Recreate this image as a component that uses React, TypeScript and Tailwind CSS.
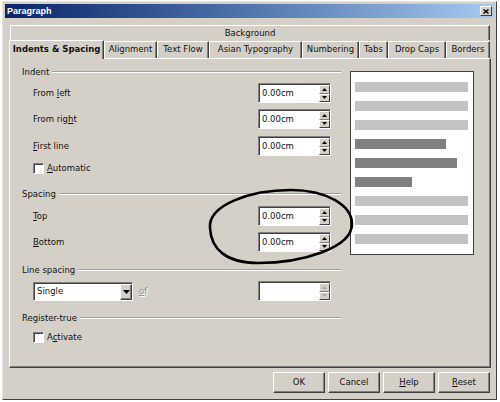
import React from "react";

const Up = ({ c = "#000" }: { c?: string }) => (
  <svg width="5" height="3" viewBox="0 0 5 3"><path d="M2.5 0 L5 3 L0 3 Z" fill={c} /></svg>
);
const Down = ({ c = "#000", w = 5, h = 3 }: { c?: string; w?: number; h?: number }) => (
  <svg width={w} height={h} viewBox={`0 0 ${w} ${h}`}><path d={`M0 0 L${w} 0 L${w / 2} ${h} Z`} fill={c} /></svg>
);

function Spin({ value, disabled }: { value?: string; disabled?: boolean }) {
  const c = disabled ? "#a8a8a8" : "#000";
  return (
    <div className="flex h-[20px] w-[73px] border border-t-[#808080] border-l-[#808080] border-r-white border-b-white bg-white shadow-[inset_1px_1px_0_#404040]">
      <div className="flex flex-1 items-center pl-[3px] pt-[1px] leading-none">{value}</div>
      <div className="flex w-[11px] flex-col pt-[1px]">
        <div className="flex flex-1 items-center justify-center border border-t-white border-l-white border-r-[#404040] border-b-[#808080] bg-[#d4d0c8]">
          <Up c={c} />
        </div>
        <div className="flex flex-1 items-center justify-center border border-t-white border-l-white border-r-[#404040] border-b-[#404040] bg-[#d4d0c8]">
          <Down c={c} />
        </div>
      </div>
    </div>
  );
}

function Check() {
  return (
    <div className="h-[11px] w-[11px] border border-t-[#808080] border-l-[#808080] border-r-white border-b-white bg-white shadow-[inset_1px_1px_0_#404040]" />
  );
}

function Group({ label, mt }: { label: string; mt: string }) {
  return (
    <div className={`flex h-[12px] items-center ${mt}`}>
      <span className="leading-[12px]">{label}</span>
      <div className="ml-[3px] h-[2px] flex-1 border-t border-b border-t-[#a0a0a0] border-b-white" />
    </div>
  );
}

function Field({ children, mt, value = "0.00cm" }: { children: React.ReactNode; mt: string; value?: string }) {
  return (
    <div className={`flex h-[20px] items-center pl-[11px] pr-[10px] ${mt}`}>
      <span className="flex-1 leading-[12px]">{children}</span>
      <Spin value={value} />
    </div>
  );
}

function Btn({ children }: { children: React.ReactNode }) {
  return (
    <div className="flex h-[21px] w-[52px] items-center justify-center border border-t-white border-l-white border-r-[#404040] border-b-[#404040] bg-[#d4d0c8] shadow-[inset_-1px_-1px_0_#808080]">
      {children}
    </div>
  );
}

const tabs: [string, number][] = [
  ["Alignment", 53],
  ["Text Flow", 52],
  ["Asian Typography", 93],
  ["Numbering", 57],
  ["Tabs", 29],
  ["Drop Caps", 58],
  ["Borders", 44],
];

export default function App() {
  const bars: [number, boolean][] = [
    [113, false],
    [113, false],
    [113, false],
    [91, true],
    [102, true],
    [57, true],
    [113, false],
    [113, false],
    [113, false],
  ];
  return (
    <div className="relative h-[402px] w-[500px] overflow-hidden bg-white font-['DejaVu_Sans',sans-serif] text-[8.5px] text-[#111]">
      <div className="ml-[2px] mt-[1px] flex h-[399px] w-[495px] flex-col border border-t-[#e8e6e0] border-l-[#e8e6e0] border-r-[#404040] border-b-[#404040] bg-[#d4d0c8] p-[2px]">
        {/* title bar */}
        <div className="flex h-[14px] items-center justify-between bg-linear-to-r from-[#0a246a] to-[#a6caf0] pl-[2px] pr-[2px]">
          <span className="font-['Liberation_Sans',sans-serif] text-[9px] font-bold leading-none text-white">Paragraph</span>
          <div className="flex h-[10px] w-[12px] items-center justify-center border border-t-white border-l-white border-r-[#404040] border-b-[#404040] bg-[#d4d0c8]">
            <svg width="6" height="5" viewBox="0 0 6 5">
              <path d="M0.5 0.5 L5.5 4.5 M5.5 0.5 L0.5 4.5" stroke="#000" strokeWidth="1.4" />
            </svg>
          </div>
        </div>

        <div className="mt-[7px] flex flex-col pl-[4px] pr-[3px]">
          {/* back tab row */}
          <div className="mx-[1px] flex h-[15px] items-center justify-center border-t border-l border-r border-t-white border-l-white border-r-[#404040] shadow-[inset_-1px_0_0_#808080] leading-none">
            Background
          </div>
          {/* front tab row */}
          <div className="flex h-[18px]">
            <div className="relative z-10 -mb-[1px] flex h-[19px] w-[95px] items-center justify-center border-t border-l border-r border-t-white border-l-white border-r-[#404040] bg-[#d4d0c8] pb-[2px] font-bold leading-none shadow-[inset_-1px_0_0_#808080]">
              Indents &amp; Spacing
            </div>
            {tabs.map(([t, w]) => (
              <div
                key={t}
                style={{ width: w }}
                className="mt-[1px] flex items-center justify-center border-t border-l border-r border-t-white border-l-white border-r-[#404040] pb-[2px] leading-none shadow-[inset_-1px_0_0_#808080]"
              >
                {t}
              </div>
            ))}
          </div>
          {/* panel */}
          <div className="flex h-[310px] border border-t-white border-l-white border-r-[#404040] border-b-[#404040] pl-[12px] shadow-[inset_-1px_-1px_0_#808080]">
            <div className="flex w-[319px] flex-col">
              <Group label="Indent" mt="mt-[7px]" />
              <Field mt="mt-[5px]">From <u className="underline-offset-1">l</u>eft</Field>
              <Field mt="mt-[6px]">From rig<u className="underline-offset-1">h</u>t</Field>
              <Field mt="mt-[7px]"><u className="underline-offset-1">F</u>irst line</Field>
              <div className="mt-[6px] flex h-[12px] items-center pl-[11px]">
                <Check />
                <span className="ml-[3px] leading-[12px]"><u className="underline-offset-1">A</u>utomatic</span>
              </div>
              <Group label="Spacing" mt="mt-[14px]" />
              <Field mt="mt-[6px]"><u className="underline-offset-1">T</u>op</Field>
              <Field mt="mt-[6px]"><u className="underline-offset-1">B</u>ottom</Field>
              <Group label="Line spacing" mt="mt-[12px]" />
              <div className="mt-[5px] flex h-[20px] items-center pl-[11px] pr-[10px]">
                <div className="flex h-[19px] w-[100px] border border-t-[#808080] border-l-[#808080] border-r-white border-b-white bg-white shadow-[inset_1px_1px_0_#404040]">
                  <div className="flex flex-1 items-center pl-[3px] pt-[1px] leading-none">Single</div>
                  <div className="mt-[1px] flex w-[12px] items-center justify-center border border-t-white border-l-white border-r-[#404040] border-b-[#404040] bg-[#d4d0c8] shadow-[inset_-1px_-1px_0_#808080]">
                    <Down w={7} h={4} />
                  </div>
                </div>
                <span className="ml-[6px] flex-1 leading-[12px] text-[#909090] [text-shadow:1px_1px_0_#fff]">
                  <u className="underline-offset-1">o</u>f
                </span>
                <Spin disabled />
              </div>
              <Group label="Register-true" mt="mt-[11px]" />
              <div className="mt-[7px] flex h-[12px] items-center pl-[11px]">
                <Check />
                <span className="ml-[3px] leading-[12px]">A<u className="underline-offset-1">c</u>tivate</span>
              </div>
            </div>
            {/* preview */}
            <div className="ml-[9px] mt-[12px] flex h-[184px] w-[124px] flex-col gap-[9px] border border-[#404040] bg-white pl-[4px] pt-[10px]">
              {bars.map(([w, dark], i) => (
                <div
                  key={i}
                  style={{ width: w }}
                  className={`h-[10px] shrink-0 ${dark ? "bg-[#808080]" : "bg-[#c3c3c3]"}`}
                />
              ))}
            </div>
          </div>
        </div>

        {/* buttons */}
        <div className="mt-[4px] flex justify-end gap-[3px] pr-[4px]">
          <Btn>OK</Btn>
          <Btn>Cancel</Btn>
          <Btn><span><u className="underline-offset-1">H</u>elp</span></Btn>
          <Btn><span><u className="underline-offset-1">R</u>eset</span></Btn>
        </div>
      </div>

      {/* hand-drawn annotation ellipse */}
      <svg className="pointer-events-none absolute left-0 top-0" width="500" height="402" viewBox="0 0 500 402">
        <path
          d="M210 228 C208 205 250 190 291 190 C326 190 352 205 352 224 C352 248 302 263 258 263 C226 263 211 249 210 228 Z"
          fill="none"
          stroke="#000"
          strokeWidth="2.6"
        />
      </svg>
    </div>
  );
}
